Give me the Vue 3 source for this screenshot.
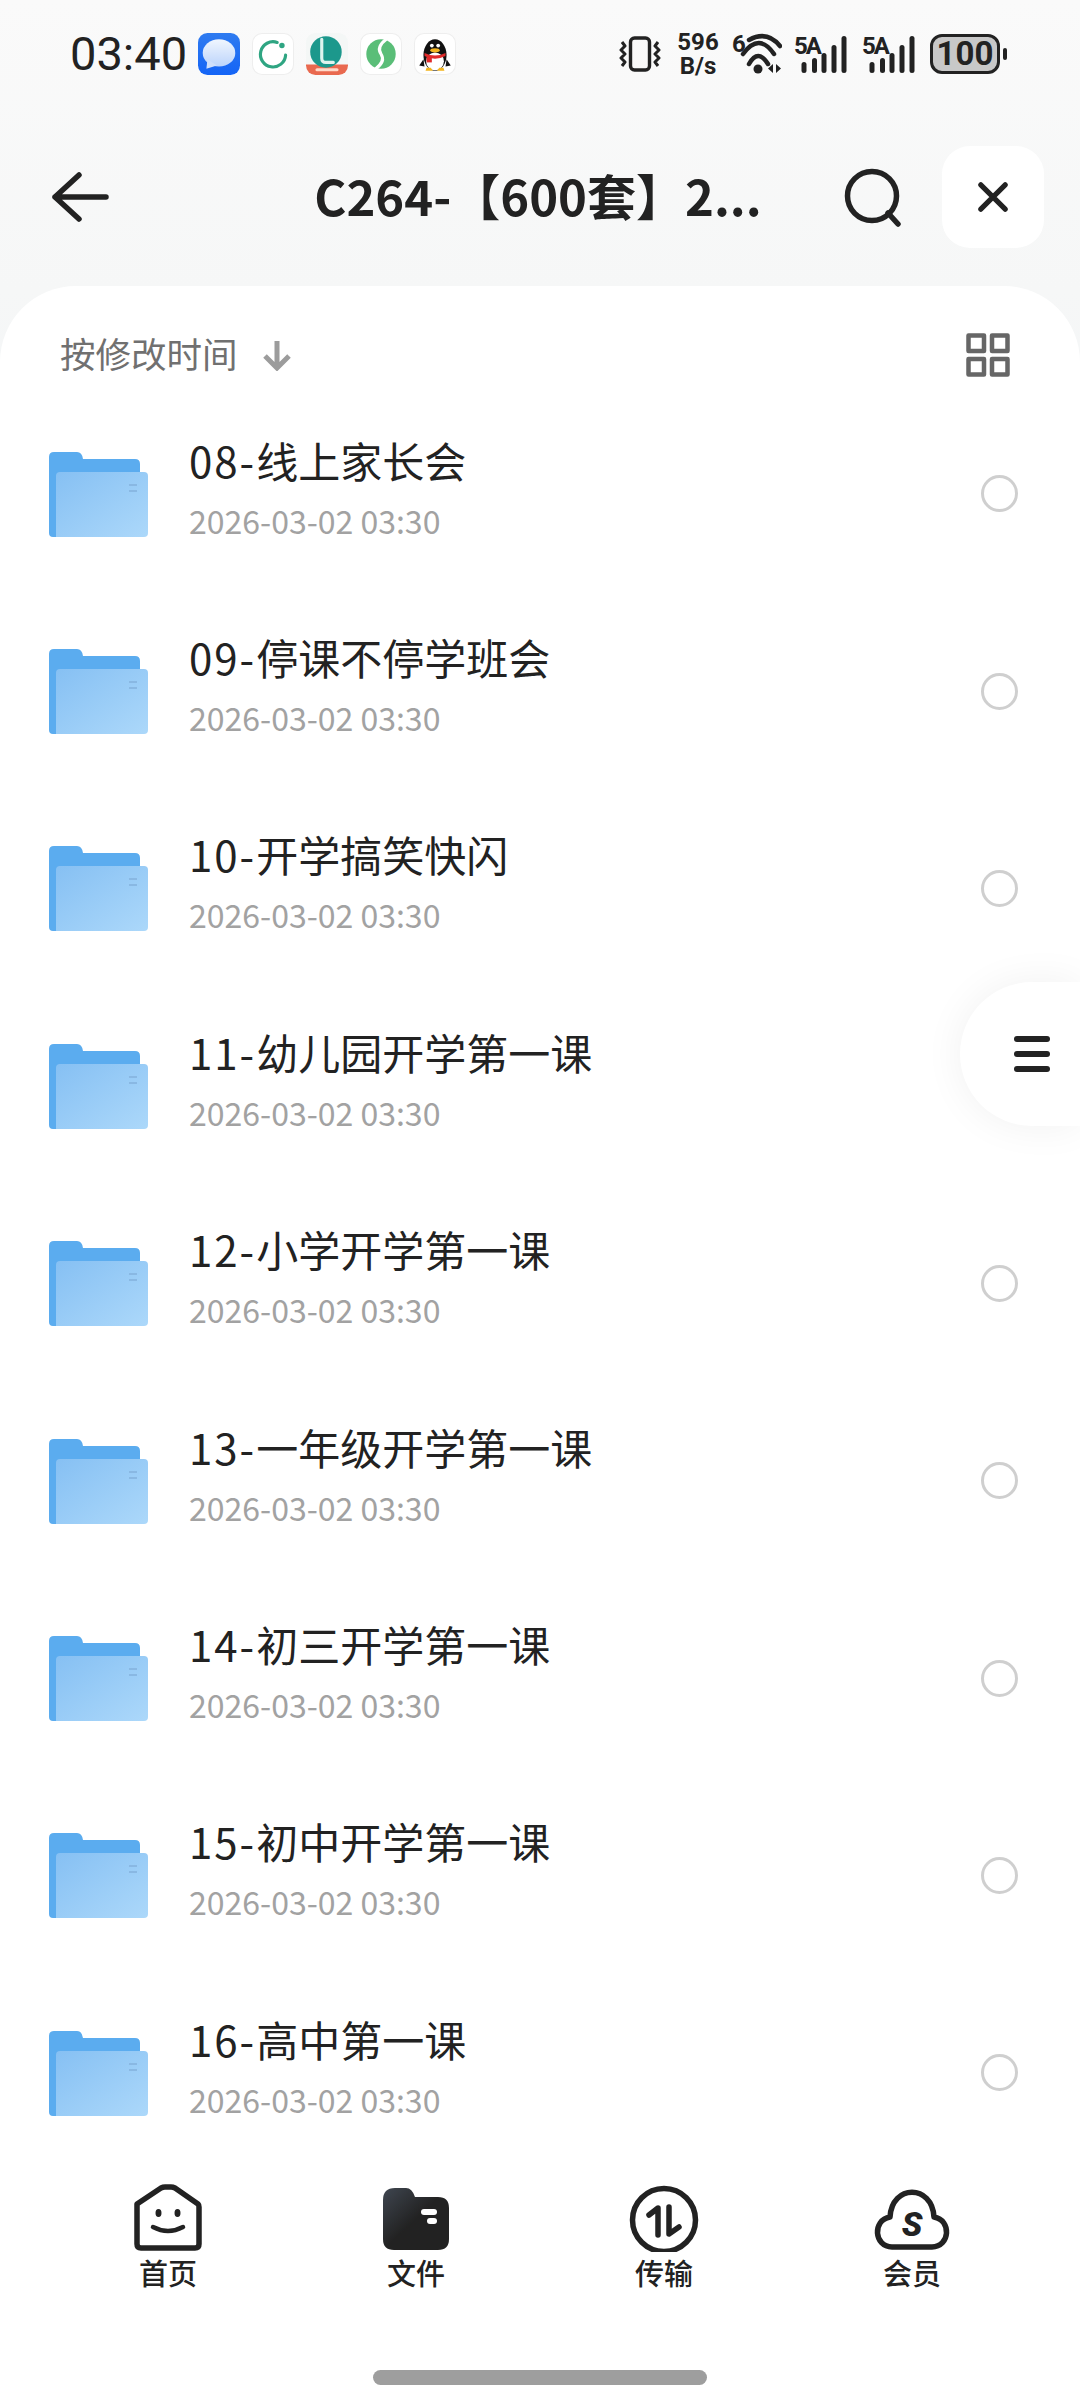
<template>
  <div class="page">
    <!-- status bar -->
    <div class="status">
      <span class="clock">03:40</span>
      <div class="notifs">
        <svg class="app" viewBox="0 0 40 40">
          <defs>
            <linearGradient id="msgBg" x1="0" y1="0" x2="0" y2="1"><stop offset="0" stop-color="#2f7bf0" /><stop offset="1" stop-color="#1464f6" /></linearGradient>
            <linearGradient id="msgFg" x1="0" y1="0" x2="0" y2="1"><stop offset="0" stop-color="#f0f6fe" /><stop offset="1" stop-color="#bcd4fb" /></linearGradient>
          </defs>
          <rect width="40" height="40" rx="9" fill="url(#msgBg)" />
          <ellipse cx="20" cy="19" rx="15.500" ry="13" fill="url(#msgFg)" />
          <path d="M9 25 L8 34 L18 31 Z" fill="#cfdffb" />
        </svg>
        <svg class="app" viewBox="0 0 40 40">
          <rect x=".5" y=".5" width="39" height="39" rx="9" fill="#fff" stroke="#eee" />
          <path d="M24 9 A12 12 0 1 0 32 21" fill="none" stroke="#2fa582" stroke-width="3" stroke-linecap="round" />
          <circle cx="28.500" cy="12" r="2.600" fill="#2fa582" />
        </svg>
        <svg class="app" viewBox="0 0 40 40">
          <rect width="40" height="40" rx="9" fill="#f4f7f6" />
          <path d="M0 30 H40 V31 A9 9 0 0 1 31 40 H9 A9 9 0 0 1 0 31 Z" fill="#e9694f" />
          <circle cx="19" cy="18" r="15" fill="#1c988c" />
          <path d="M15 6 V24 Q15 28 19 28 H26" fill="none" stroke="#dff3ee" stroke-width="3" stroke-linecap="round" />
          <rect x="9" y="33.500" width="22" height="3" rx="1.500" fill="#ffd9c9" />
        </svg>
        <svg class="app" viewBox="0 0 40 40">
          <rect x=".5" y=".5" width="39" height="39" rx="9" fill="#fff" stroke="#eee" />
          <circle cx="20" cy="20" r="14" fill="#5abe78" />
          <path d="M25 6 C17 12 18 17 20 20 C22 23 23 28 15 34" fill="none" stroke="#fff" stroke-width="3" />
        </svg>
        <svg class="app" viewBox="0 0 40 40">
          <rect x=".5" y=".5" width="39" height="39" rx="9" fill="#fff" stroke="#eee" />
          <ellipse cx="20" cy="21" rx="11" ry="15" fill="#111" />
          <path d="M9 25 L5 31 L10 32 Z M31 25 L35 31 L30 32 Z" fill="#111" />
          <ellipse cx="20" cy="27" rx="8.500" ry="8.500" fill="#fff" />
          <path d="M10 19 Q20 24 30 19 L30 22 Q20 27 10 22 Z" fill="#e02a2a" />
          <path d="M12 22 H17 V28 H12 Z" fill="#e02a2a" />
          <ellipse cx="20" cy="16.500" rx="4.500" ry="2" fill="#f3b51e" />
          <circle cx="17" cy="12" r="1.800" fill="#fff" />
          <circle cx="23" cy="12" r="1.800" fill="#fff" />
          <path d="M11 36 H18 L16 33 H12 Z M22 36 H29 L28 33 H24 Z" fill="#f3b51e" />
        </svg>
      </div>
      <div class="sys">
        <svg class="vib" viewBox="0 0 42 36" width="42" height="36">
          <rect x="11.500" y="2" width="19" height="32" rx="4" fill="none" stroke="#222" stroke-width="3.400" />
          <path d="M3 6 L6 10 L2 14 L6 18 L2 22 L6 26 L3 30 M39 6 L36 10 L40 14 L36 18 L40 22 L36 26 L39 30" fill="none" stroke="#222" stroke-width="3" stroke-linejoin="round" />
        </svg>
        <div class="speed"><span>596</span><span>B/s</span></div>
        <svg class="wifi" viewBox="0 -6 50 48" width="50" height="48">
          <text x="0" y="19" class="wifi-six">6</text>
          <path d="M17 7 Q35 -3 48 13" fill="none" stroke="#222" stroke-width="4.500" stroke-linecap="round" />
          <path d="M11 21 Q27 -1 42 21" fill="none" stroke="#222" stroke-width="4.500" stroke-linecap="round" />
          <path d="M17 31 Q26 15 36 31" fill="none" stroke="#222" stroke-width="4.500" stroke-linecap="round" />
          <circle cx="26" cy="36" r="4.500" fill="#222" />
          <path d="M41 31 V40 L36 35.500 Z M44 31 V40 L49 35.500 Z" fill="#222" />
        </svg>
        <svg v-for="n in 2" :key="n" class="signal" viewBox="0 -6 54 46" width="54" height="46">
          <text x="0" y="20" class="sig-label">5A</text>
          <rect v-for="bar in signalBars" :key="bar.x" :x="bar.x" :y="bar.y" width="5" :height="39 - bar.y" rx="2.500" fill="#222" />
        </svg>
        <div class="battery">
          <div class="batt-body">100</div>
          <span class="batt-nub"></span>
        </div>
      </div>
    </div>

    <!-- header -->
    <div class="header">
      <svg class="back" viewBox="0 0 57 50" width="57" height="50">
        <path d="M54 25 H3 M27 3 L3 25 L27 47" fill="none" stroke="#222" stroke-width="5.500" stroke-linecap="round" stroke-linejoin="round" />
      </svg>
      <div class="title">C264-【600套】2...</div>
      <svg class="search" viewBox="0 0 60 60" width="60" height="60">
        <circle cx="29" cy="29" r="24.500" fill="none" stroke="#222" stroke-width="5.500" />
        <path d="M45 46 L55 57" fill="none" stroke="#222" stroke-width="5.500" stroke-linecap="round" />
      </svg>
      <div class="close">
        <svg viewBox="0 0 32 32" width="30" height="30">
          <path d="M3 3 L29 29 M29 3 L3 29" fill="none" stroke="#222" stroke-width="5.500" stroke-linecap="round" />
        </svg>
      </div>
    </div>

    <!-- file list -->
    <div class="card">
      <div class="sort">
        <span class="sort-label">按修改时间</span>
        <svg viewBox="0 0 30 32" width="30" height="32">
          <path d="M15 2 V29 M3 17 L15 29 L27 17" fill="none" stroke="#9c9c9c" stroke-width="5" />
        </svg>
        <svg class="grid-icon" viewBox="0 0 44 44" width="44" height="44">
          <g fill="none" stroke="#666" stroke-width="4.500" stroke-linejoin="round">
            <rect x="2.500" y="2.500" width="15.500" height="15.500" />
            <rect x="26" y="2.500" width="15.500" height="15.500" />
            <rect x="2.500" y="26" width="15.500" height="15.500" />
            <rect x="26" y="26" width="15.500" height="15.500" />
          </g>
        </svg>
      </div>

      <div class="list">
        <div v-for="item in folders" :key="item.no" class="row">
          <svg class="folder" viewBox="0 0 100 86" width="100" height="86">
            <defs>
              <linearGradient id="folderFront" x1="0" y1="0" x2="1" y2="1">
                <stop offset="0" stop-color="#86c0f3" />
                <stop offset="1" stop-color="#acd8fa" />
              </linearGradient>
            </defs>
            <path d="M1 6 Q1 1 6 1 H29 Q34 1 35 8 H87 Q92 8 92 13 V86 H5 Q1 86 1 82 Z" fill="#5bacef" />
            <path d="M8 25 Q8 21 12 21 H96 Q100 21 100 25 V82 Q100 86 96 86 H8 Z" fill="url(#folderFront)" />
            <path d="M81 34 H89 M81 40 H89" stroke="#89b8e3" stroke-width="2" />
          </svg>
          <div class="text">
            <div class="name"><span class="no">{{ item.no }}-</span>{{ item.name }}</div>
            <div class="date">2026-03-02 03:30</div>
          </div>
          <span class="radio"></span>
        </div>
      </div>

      <div class="tabs">
        <div class="tab">
          <svg viewBox="0 0 80 68" width="80" height="68">
            <path d="M8 20 L32 4 Q34 3 36 3 L42 3 Q44 3 46 4 L69 20 Q70 21 70 23 V60 Q70 64 66 64 H12 Q8 64 8 60 Z" transform="translate(1 0)" fill="none" stroke="#222" stroke-width="5.500" stroke-linejoin="round" />
            <ellipse cx="30.500" cy="29" rx="3" ry="4" fill="#222" />
            <ellipse cx="49.500" cy="29" rx="3" ry="4" fill="#222" />
            <path d="M25 43 Q40 51 55 43" fill="none" stroke="#222" stroke-width="4.500" stroke-linecap="round" />
          </svg>
          <span>首页</span>
        </div>
        <div class="tab">
          <svg viewBox="0 0 80 68" width="80" height="68">
            <defs>
              <linearGradient id="fileTab" x1="0" y1="0" x2="1" y2="1">
                <stop offset="0" stop-color="#3f4650" />
                <stop offset=".5" stop-color="#222" />
                <stop offset="1" stop-color="#222" />
              </linearGradient>
            </defs>
            <path d="M7 16 Q7 4 19 4 H30 Q36 4 39 13 H62 Q73 13 73 24 V55 Q73 66 62 66 H18 Q7 66 7 55 Z" fill="url(#fileTab)" />
            <rect x="45" y="25" width="16" height="6" rx="3" fill="#fff" />
            <rect x="51" y="34" width="10" height="6" rx="3" fill="#fff" />
          </svg>
          <span>文件</span>
        </div>
        <div class="tab">
          <svg viewBox="0 0 80 68" width="80" height="68">
            <circle cx="40" cy="36" r="31.500" fill="none" stroke="#222" stroke-width="5.500" />
            <path d="M34 51 V24 L25 31" fill="none" stroke="#222" stroke-width="5.500" stroke-linecap="round" stroke-linejoin="round" />
            <path d="M45 23 V50 L55 43" fill="none" stroke="#222" stroke-width="5.500" stroke-linecap="round" stroke-linejoin="round" />
          </svg>
          <span>传输</span>
        </div>
        <div class="tab">
          <svg viewBox="0 0 80 68" width="80" height="68">
            <path d="M20 63 H60 C78 63 80 36 62 33 C60 0 20 0 18 33 C0 36 2 63 20 63 Z" fill="none" stroke="#222" stroke-width="5.500" stroke-linejoin="round" />
            <text x="40" y="52" text-anchor="middle" class="cloud-s">S</text>
          </svg>
          <span>会员</span>
        </div>
      </div>

      <div class="home-bar"></div>
    </div>

    <div class="float-btn">
      <span></span><span></span><span></span>
    </div>
  </div>
</template>

<script setup>
const folders = [
  { no: '08', name: '线上家长会' },
  { no: '09', name: '停课不停学班会' },
  { no: '10', name: '开学搞笑快闪' },
  { no: '11', name: '幼儿园开学第一课' },
  { no: '12', name: '小学开学第一课' },
  { no: '13', name: '一年级开学第一课' },
  { no: '14', name: '初三开学第一课' },
  { no: '15', name: '初中开学第一课' },
  { no: '16', name: '高中第一课' }
]

const signalBars = [
  { x: 7.500, y: 28 },
  { x: 18, y: 24 },
  { x: 27.500, y: 19 },
  { x: 37.500, y: 11 },
  { x: 47.500, y: 2 }
]
</script>

<style scoped>
.page {
  position: relative;
  width: 1080px;
  height: 2403px;
  overflow: hidden;
  display: flex;
  flex-direction: column;
  background: linear-gradient(#fafafa, #f6f7f7 290px, #f4f6f7 400px);
  color: #222;
  font-family: "Noto Sans CJK SC", "Noto Sans", sans-serif;
}

/* status bar */
.status {
  height: 107px;
  box-sizing: border-box;
  padding: 0 73px 0 70px;
  display: flex;
  align-items: center;
}

.clock {
  font-family: Roboto, sans-serif;
  font-size: 47px;
  line-height: 1;
  width: 128px;
}

.notifs {
  display: flex;
  gap: 12px;
}

.app {
  width: 42px;
  height: 42px;
}

.sys {
  margin-left: auto;
  display: flex;
  align-items: center;
}

.vib {
  margin-right: 17px;
}

.speed {
  display: flex;
  flex-direction: column;
  align-items: center;
  font-family: Roboto, sans-serif;
  font-weight: 700;
  font-size: 24px;
  line-height: 24px;
  width: 40px;
  margin-right: 14px;
}

.wifi {
  margin: -6px 12px 0 0;
}

.wifi-six,
.sig-label {
  font-family: Roboto, sans-serif;
  font-weight: 700;
  font-size: 24px;
  fill: #222;
}

.sig-label {
  letter-spacing: -2px;
}

.signal {
  margin: -6px 14px 0 0;
}

.battery {
  display: flex;
  align-items: center;
  gap: 3px;
}

.batt-body {
  width: 70px;
  height: 40px;
  box-sizing: border-box;
  border: 3.500px solid #222;
  border-radius: 12px;
  background: #c8c8c8;
  display: flex;
  align-items: center;
  justify-content: center;
  font-family: Roboto, sans-serif;
  font-weight: 700;
  font-size: 33px;
}

.batt-nub {
  width: 4px;
  height: 12px;
  border-radius: 2px;
  background: #222;
}

/* header */
.header {
  height: 179px;
  box-sizing: border-box;
  padding: 0 36px 0 52px;
  display: flex;
  align-items: center;
}

.title {
  flex: 1;
  text-align: center;
  font-size: 49px;
  font-weight: 700;
  padding: 0 0 5px 124px;
  white-space: nowrap;
}

.search {
  margin-right: 39px;
}

.close {
  width: 102px;
  height: 102px;
  border-radius: 28px;
  background: #fff;
  display: flex;
  align-items: center;
  justify-content: center;
}

/* card */
.card {
  flex: 1;
  min-height: 0;
  display: flex;
  flex-direction: column;
  background: #fff;
  border-radius: 76px 76px 0 0;
}

.sort {
  height: 109px;
  flex-shrink: 0;
  box-sizing: border-box;
  padding: 28px 70px 0 60px;
  display: flex;
  align-items: center;
  gap: 24px;
}

.sort-label {
  font-size: 35.500px;
  color: #707070;
  padding-bottom: 4px;
}

.grid-icon {
  margin-left: auto;
}

.list {
  height: 1777px;
  flex-shrink: 0;
  overflow: hidden;
}

.row {
  height: 197.400px;
  box-sizing: border-box;
  padding: 0 62px 0 48px;
  display: flex;
  align-items: center;
}

.folder {
  flex-shrink: 0;
}

.text {
  flex: 1;
  margin-left: 41px;
  padding-bottom: 14px;
}

.name {
  font-size: 42px;
  line-height: 54px;
  color: #222;
}

.no {
  letter-spacing: 2px;
}

.date {
  margin-top: 12px;
  font-size: 32px;
  line-height: 42px;
  color: #a2a2a2;
}

.radio {
  width: 37px;
  height: 37px;
  box-sizing: border-box;
  border: 3px solid #cfcfcf;
  border-radius: 50%;
}

/* bottom tabs */
.tabs {
  padding: 12px 44px 0;
  display: grid;
  grid-template-columns: repeat(4, 1fr);
}

.tab {
  display: flex;
  flex-direction: column;
  align-items: center;
  font-size: 29px;
  font-weight: 500;
  line-height: 36px;
  gap: 2px;
}

.cloud-s {
  font-family: Roboto, sans-serif;
  font-weight: 900;
  font-style: italic;
  font-size: 34px;
  fill: #222;
}

.home-bar {
  width: 334px;
  height: 15px;
  margin: 80px auto 0;
  border-radius: 8px;
  background: #9e9e9e;
}

/* floating menu */
.float-btn {
  position: absolute;
  right: 0;
  top: 982px;
  width: 120px;
  height: 144px;
  box-sizing: border-box;
  padding-left: 54px;
  border-radius: 72px 0 0 72px;
  background: #fff;
  box-shadow: 0 0 40px rgba(0, 0, 0, .06);
  display: flex;
  flex-direction: column;
  justify-content: center;
  gap: 9px;
}

.float-btn span {
  width: 36px;
  height: 6px;
  border-radius: 3px;
  background: #222;
}
</style>
